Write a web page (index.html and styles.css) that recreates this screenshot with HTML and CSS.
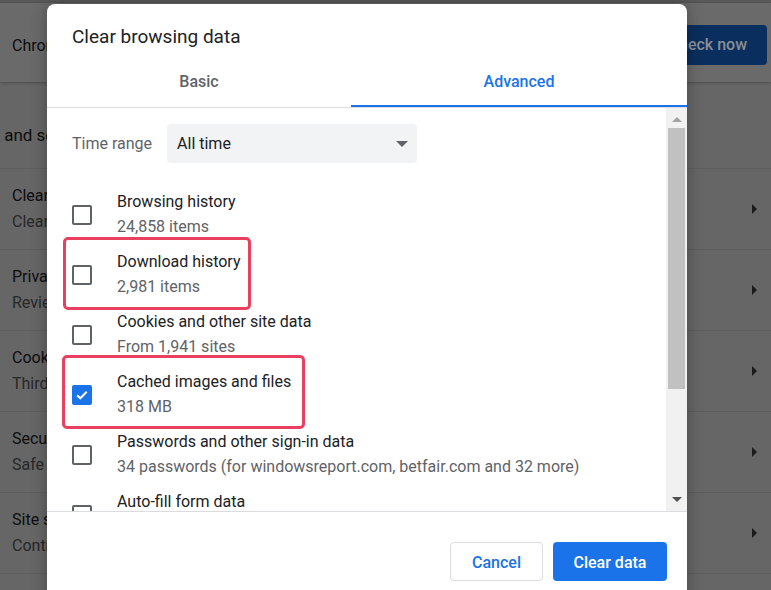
FILE: index.html
```html
<!DOCTYPE html>
<html lang="en">
<head>
    <meta charset="UTF-8">
    <meta name="viewport" content="width=device-width, initial-scale=1.0">
    <title>Settings - Clear browsing data</title>
    <link rel="stylesheet" href="styles.css">
</head>
<body>
    <div class="page">
        <div class="top-strip"></div>
        <div class="safety-card">
            <span class="safety-text">Chrome can help keep you safe from data breaches, bad extensions, and more</span>
            <span class="check-btn">Check now</span>
        </div>
        <h2 class="section-title">Privacy and security</h2>
        <div class="settings-card">
            <div class="row">
                <div class="row-text">
                    <div class="row-title">Clear browsing data</div>
                    <div class="row-sub">Clear history, cookies, cache, and more</div>
                </div>
                <span class="chevron"></span>
            </div>
            <div class="row">
                <div class="row-text">
                    <div class="row-title">Privacy Guide</div>
                    <div class="row-sub">Review key privacy and security controls</div>
                </div>
                <span class="chevron"></span>
            </div>
            <div class="row">
                <div class="row-text">
                    <div class="row-title">Cookies and other site data</div>
                    <div class="row-sub">Third-party cookies are blocked in Incognito mode</div>
                </div>
                <span class="chevron"></span>
            </div>
            <div class="row">
                <div class="row-text">
                    <div class="row-title">Security</div>
                    <div class="row-sub">Safe Browsing (protection from dangerous sites) and other security settings</div>
                </div>
                <span class="chevron"></span>
            </div>
            <div class="row">
                <div class="row-text">
                    <div class="row-title">Site settings</div>
                    <div class="row-sub">Controls what information sites can use and show</div>
                </div>
                <span class="chevron"></span>
            </div>
        </div>
    </div>

    <div class="dialog">
        <div class="dialog-title">Clear browsing data</div>
        <div class="tabs">
            <div class="tab tab-basic">Basic</div>
            <div class="tab tab-active">Advanced</div>
        </div>

        <div class="dialog-body">
            <div class="list">
                <div class="time-range">
                    <span class="time-label">Time range</span>
                    <div class="select">
                        <span>All time</span>
                        <span class="select-arrow"></span>
                    </div>
                </div>

                <div class="item">
                    <span class="checkbox"></span>
                    <div class="item-text">
                        <div class="item-title">Browsing history</div>
                        <div class="item-sub">24,858 items</div>
                    </div>
                </div>
                <div class="item">
                    <span class="checkbox"></span>
                    <div class="item-text">
                        <div class="item-title">Download history</div>
                        <div class="item-sub">2,981 items</div>
                    </div>
                </div>
                <div class="item">
                    <span class="checkbox"></span>
                    <div class="item-text">
                        <div class="item-title">Cookies and other site data</div>
                        <div class="item-sub">From 1,941 sites</div>
                    </div>
                </div>
                <div class="item">
                    <span class="checkbox checked">
                        <svg width="18" height="18" viewBox="0 0 18 18"><path d="M3.5 9.2l3.6 3.5 7.2-7.3" fill="none" stroke="#fff" stroke-width="2.2"/></svg>
                    </span>
                    <div class="item-text">
                        <div class="item-title">Cached images and files</div>
                        <div class="item-sub">318 MB</div>
                    </div>
                </div>
                <div class="item">
                    <span class="checkbox"></span>
                    <div class="item-text">
                        <div class="item-title">Passwords and other sign-in data</div>
                        <div class="item-sub">34 passwords (for windowsreport.com, betfair.com and 32 more)</div>
                    </div>
                </div>
                <div class="item">
                    <span class="checkbox"></span>
                    <div class="item-text">
                        <div class="item-title">Auto-fill form data</div>
                    </div>
                </div>

                <!-- annotation boxes -->
                <div class="mark mark-download"></div>
                <div class="mark mark-cache"></div>
            </div>

            <div class="scrollbar">
                <span class="arrow-up"></span>
                <div class="track">
                    <div class="thumb"></div>
                </div>
                <span class="arrow-down"></span>
            </div>
        </div>

        <div class="dialog-footer">
            <button class="btn btn-cancel">Cancel</button>
            <button class="btn btn-primary">Clear data</button>
        </div>
    </div>
</body>
</html>
```

FILE: styles.css
```css
body {
    margin: 0;
    font-family: Roboto, 'Liberation Sans', sans-serif;
    background-color: #666666;
    overflow: hidden;
    height: 590px;
}
.page {
    color: #0d0d0e;
}
.top-strip {
    height: 3px;
    background-color: #595959;
}
.safety-card {
    height: 79px;
    background-color: #6a6a6a;
    display: flex;
    align-items: center;
    justify-content: space-between;
    padding: 0 4px 0 12px;
    box-shadow: 0 1px 3px rgba(0,0,0,0.25);
    font-size: 16px;
    white-space: nowrap;
    overflow: hidden;
}
.safety-text {
    margin-top: 6px;
}
.check-btn {
    background-color: #0a2e5d;
    color: #8a8e95;
    font-weight: 500;
    font-size: 16px;
    height: 40px;
    line-height: 40px;
    padding: 0 20px;
    border-radius: 4px;
    margin-top: 4px;
}
.section-title {
    font-size: 17px;
    font-weight: 400;
    margin: 0 0 0 -55px;
    height: 86px;
    line-height: 106px;
    white-space: nowrap;
}
.settings-card {
    border-top: 1px solid #5e5e5e;
}
.row {
    height: 80px;
    border-bottom: 1px solid #5e5e5e;
    display: flex;
    align-items: center;
    padding: 0 14px 0 12px;
}
.row-text {
    flex: 1;
    font-size: 16px;
    line-height: 26px;
    white-space: nowrap;
    overflow: hidden;
}
.row-sub {
    color: #262829;
}
.chevron {
    width: 0;
    height: 0;
    border-top: 5px solid transparent;
    border-bottom: 5px solid transparent;
    border-left: 5px solid #1b1b1b;
}

/* dialog */
.dialog {
    position: absolute;
    top: 4px;
    left: 47px;
    width: 640px;
    height: 600px;
    background-color: #fff;
    border-radius: 8px 8px 0 0;
    box-shadow: 0 0 16px rgba(0,0,0,0.3);
    display: flex;
    flex-direction: column;
    color: #202124;
}
.dialog-title {
    font-size: 19px;
    line-height: 24px;
    padding: 21px 25px 0;
}
.tabs {
    display: flex;
    border-bottom: 1px solid #dadce0;
}
.tab {
    font-size: 16px;
    font-weight: 500;
    line-height: 24px;
    padding: 21px 0 11px;
    text-align: center;
    border-bottom: 2px solid transparent;
    color: #5f6368;
}
.tab-basic {
    width: 304px;
}
.tab-active {
    flex: 1;
    color: #1a73e8;
    border-bottom-color: #1a73e8;
}
.dialog-body {
    height: 403px;
    display: flex;
    border-bottom: 1px solid #dadce0;
    overflow: hidden;
}
.list {
    flex: 1;
    position: relative;
    padding: 16px 0 0 25px;
}
.time-range {
    display: flex;
    align-items: center;
    gap: 15px;
    margin-bottom: 22px;
}
.time-label {
    font-size: 16px;
    color: #5f6368;
}
.select {
    width: 250px;
    height: 39px;
    background-color: #f1f3f4;
    border-radius: 4px;
    display: flex;
    align-items: center;
    justify-content: space-between;
    padding: 0 9px 0 10px;
    box-sizing: border-box;
    font-size: 16px;
}
.select-arrow {
    width: 0;
    height: 0;
    border-left: 6px solid transparent;
    border-right: 6px solid transparent;
    border-top: 6px solid #5f6368;
}
.item {
    height: 60px;
    display: flex;
    align-items: center;
}
.checkbox {
    width: 16px;
    height: 16px;
    border: 2px solid #5f6368;
    border-radius: 2px;
    flex-shrink: 0;
    display: flex;
    align-items: center;
    justify-content: center;
}
.checkbox.checked {
    background-color: #1a73e8;
    border-color: #1a73e8;
}
.item-text {
    margin-left: 25px;
    font-size: 16px;
    line-height: 25px;
    white-space: nowrap;
    align-self: flex-start;
    padding-top: 4px;
}
.item-sub {
    color: #5f6368;
}
.mark {
    position: absolute;
    border: 3px solid #e8405e;
    border-radius: 5px;
}
.mark-download {
    left: 16px;
    top: 129px;
    width: 182px;
    height: 67px;
}
.mark-cache {
    left: 15px;
    top: 247px;
    width: 237px;
    height: 68px;
}

/* scrollbar */
.scrollbar {
    width: 21px;
    background-color: #f1f1f1;
    display: flex;
    flex-direction: column;
    align-items: center;
}
.arrow-up {
    margin: 9px 0 6px;
    width: 0;
    height: 0;
    border-left: 5px solid transparent;
    border-right: 5px solid transparent;
    border-bottom: 5px solid #a3a3a3;
}
.track {
    flex: 1;
    align-self: stretch;
    padding: 0 2px 0 2px;
}
.thumb {
    height: 261px;
    background-color: #c1c1c1;
}
.arrow-down {
    margin: 6px 0 9px;
    width: 0;
    height: 0;
    border-left: 5px solid transparent;
    border-right: 5px solid transparent;
    border-top: 5px solid #505050;
}
.dialog-footer {
    display: flex;
    justify-content: flex-end;
    gap: 10px;
    padding: 30px 20px 0;
}
.btn {
    height: 39px;
    font-family: Roboto, 'Liberation Sans', sans-serif;
    font-size: 16px;
    font-weight: 500;
    border-radius: 4px;
    padding-top: 2px;
    cursor: pointer;
}
.btn-cancel {
    width: 93px;
    background-color: #fff;
    color: #1a73e8;
    border: 1px solid #dadce0;
}
.btn-primary {
    width: 114px;
    background-color: #1a73e8;
    color: #fff;
    border: none;
}
```
